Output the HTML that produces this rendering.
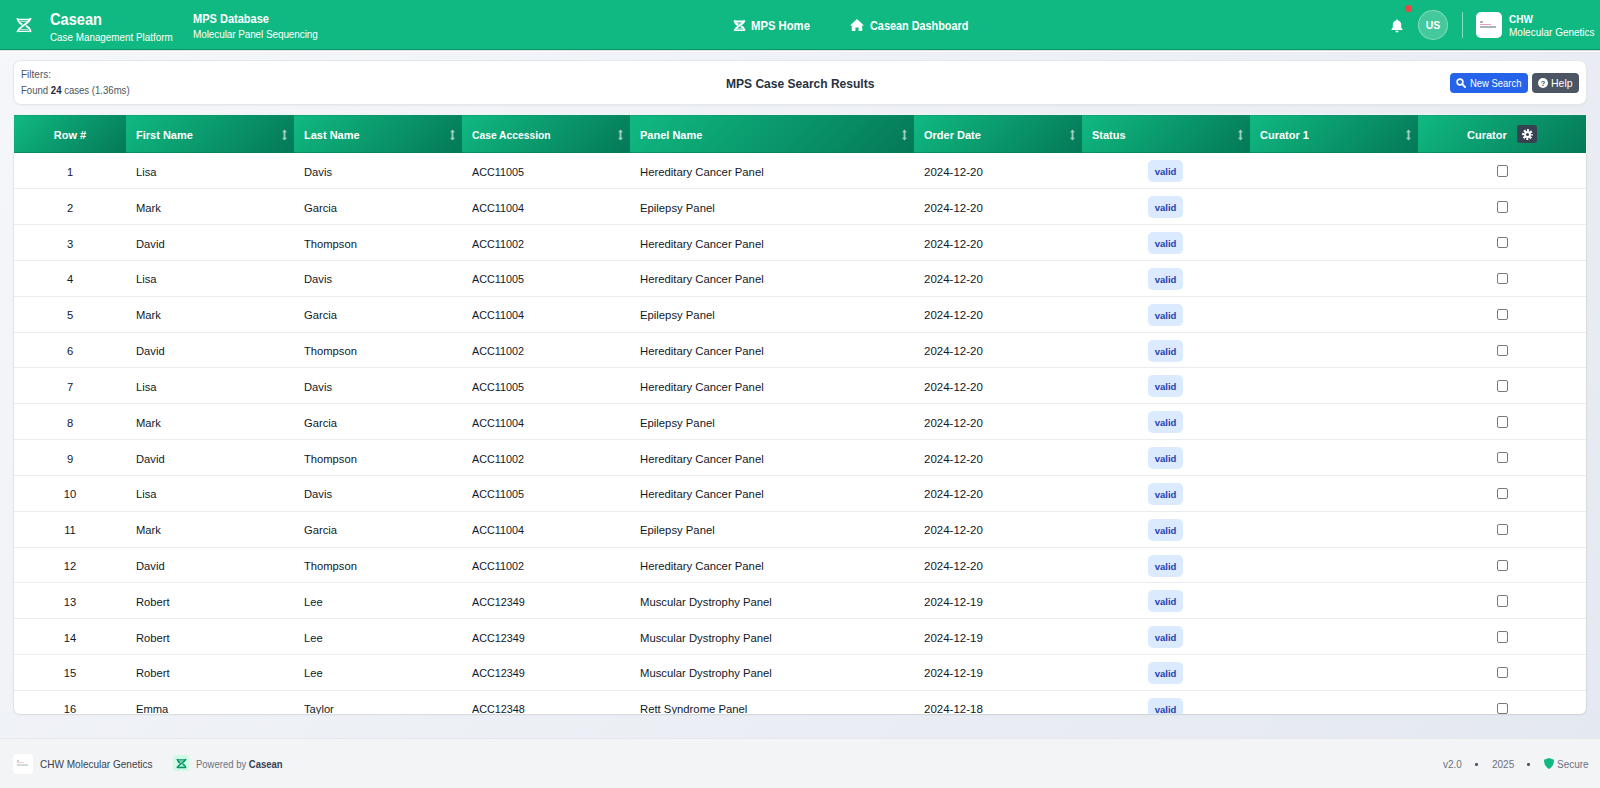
<!DOCTYPE html>
<html>
<head>
<meta charset="utf-8">
<style>
*{box-sizing:border-box;margin:0;padding:0}
html,body{width:1600px;height:788px;overflow:hidden}
body{font-family:"Liberation Sans",sans-serif;position:relative;background:linear-gradient(135deg,#f5f7fa 0%,#e4e8f0 100%);color:#1f2937}
.abs{position:absolute;white-space:nowrap}
#hdr{position:absolute;left:0;top:0;width:1600px;height:50px;background:#10b981;border-bottom:1px solid #059669;box-shadow:0 1px 2px rgba(0,0,0,.12)}
#hdrline{position:absolute;left:0;top:51px;width:1600px;height:1px;background:rgba(255,255,255,.9)}
.w{color:#fff}
svg{display:block}
#card{position:absolute;left:13px;top:60px;width:1574px;height:44.5px;background:#fff;border:1px solid #e5e7eb;border-radius:8px;box-shadow:0 1px 2px rgba(0,0,0,.04)}
.btn{position:absolute;top:73px;height:20px;border-radius:4px;color:#fff;font-size:11px}
#tblw{position:absolute;left:13px;top:114px;width:1574px;height:40px;background:#fff}
#tbl{position:absolute;left:14px;top:115px;width:1572px;height:599.3px;background:#fff;border-radius:0 0 6px 6px;overflow:hidden;box-shadow:0 0 0 1px rgba(0,0,0,.05),0 1px 3px rgba(0,0,0,.05)}
#thead{position:absolute;left:0;top:0;width:1572px;height:38.4px}
#rows{position:absolute;left:0;top:38.4px;width:1572px;display:flex;flex-direction:column}
.th{position:absolute;top:0;height:38.4px;box-shadow:inset 0 -1px 0 rgba(4,120,87,.55),inset 0 1px 0 rgba(5,150,105,.35);background:linear-gradient(135deg,#10b981 0%,#047857 100%);color:#fff;font-weight:700;font-size:11px}
.th span{position:absolute;top:14px}
.srt{position:absolute;top:14px;right:7px}
.row{position:relative;flex:0 0 35.83px;width:1572px;height:35.83px;border-bottom:1px solid #eaecef}
.c{position:absolute;top:12.5px;font-size:11.2px;color:#111827;white-space:nowrap}
.badge{position:absolute;top:7px;left:1134px;width:35px;height:22px;border-radius:5px;background:#dbeafe;color:#1e40af;font-size:9.5px;font-weight:700;text-align:center;line-height:24px}
.cb{position:absolute;top:12px;left:1482.5px;width:11.4px;height:11.4px;border:1px solid #7a7a7a;border-radius:2px;background:#fff}
#ftr{position:absolute;left:0;top:738px;width:1600px;height:50px;background:#f3f4f6;border-top:1px solid #e5e7eb}
</style>
</head>
<body>
<div id="hdr"></div>
<div id="hdrline"></div>

<!-- logo dna -->
<svg class="abs" style="left:14px;top:15px" width="20" height="20" viewBox="0 0 20 20">
 <g fill="none" stroke="#fff">
  <path d="M3.4 3.0 C3.8 6.2 5.8 8.3 8.3 9.5 M11.8 10.8 C14.2 11.9 16.2 14 16.6 17.2" stroke-width="1.9"/>
  <path d="M16.6 3.0 C15.8 8.6 4.2 11.4 3.4 17.2" stroke-width="1.9"/>
  <path d="M4.6 4.5 H15.4 M4.6 16.4 H15.4" stroke-width="1.4"/>
  <path d="M6.2 6.5 H13.8 M6.2 14.5 H13.8" stroke-width="1.0" stroke-opacity=".65"/>
 </g>
</svg>
<div class="abs w" style="left:50px;top:11px;font-size:16px;font-weight:700;transform:scaleX(.914);transform-origin:0 0">Casean</div>
<div class="abs w" style="left:50px;top:32px;font-size:10px;transform:scaleX(.985);transform-origin:0 0">Case Management Platform</div>
<div class="abs w" style="left:193px;top:12px;font-size:12px;font-weight:700;transform:scaleX(.919);transform-origin:0 0">MPS Database</div>
<div class="abs w" style="left:193px;top:29px;font-size:10px;letter-spacing:-0.1px">Molecular Panel Sequencing</div>

<!-- nav -->
<svg class="abs" style="left:732px;top:17.5px" width="15" height="15" viewBox="0 0 20 20">
 <g fill="none" stroke="#fff">
  <path d="M3.4 3.0 C3.8 6.2 5.8 8.3 8.3 9.5 M11.8 10.8 C14.2 11.9 16.2 14 16.6 17.2" stroke-width="2.7"/>
  <path d="M16.6 3.0 C15.8 8.6 4.2 11.4 3.4 17.2" stroke-width="2.7"/>
  <path d="M4.6 4.5 H15.4 M4.6 16.4 H15.4" stroke-width="2.1"/>
  <path d="M6.2 6.6 H13.8 M6.2 14.4 H13.8" stroke-width="1.4" stroke-opacity=".65"/>
 </g>
</svg>
<div class="abs w" style="left:751px;top:19px;font-size:12px;font-weight:700;transform:scaleX(.94);transform-origin:0 0">MPS Home</div>
<svg class="abs" style="left:850px;top:19px" width="14" height="12" viewBox="0 0 14 12">
 <path d="M7 0 L14 6.6 L12.2 6.6 L12.2 12 L8.6 12 L8.6 8.4 L5.4 8.4 L5.4 12 L1.8 12 L1.8 6.6 L0 6.6 Z" fill="#fff"/>
</svg>
<div class="abs w" style="left:870px;top:19px;font-size:12px;font-weight:700;transform:scaleX(.905);transform-origin:0 0">Casean Dashboard</div>

<!-- right header -->
<svg class="abs" style="left:1391px;top:19px" width="12" height="14" viewBox="0 0 12 14">
 <path d="M6 0.5 C6.6 0.5 7 0.9 7 1.5 C9 1.9 10.2 3.6 10.2 5.6 L10.2 8.5 L11.6 10.4 L11.6 11 L0.4 11 L0.4 10.4 L1.8 8.5 L1.8 5.6 C1.8 3.6 3 1.9 5 1.5 C5 0.9 5.4 0.5 6 0.5 Z M4.4 11.8 L7.6 11.8 C7.6 12.7 6.9 13.4 6 13.4 C5.1 13.4 4.4 12.7 4.4 11.8 Z" fill="#fff"/>
</svg>
<div class="abs" style="left:1405px;top:5px;width:7px;height:7px;border-radius:50%;background:#ef4444"></div>
<div class="abs" style="left:1418px;top:10px;width:30px;height:30px;border-radius:50%;background:rgba(255,255,255,.22);border:1px solid rgba(255,255,255,.35);color:#fff;font-size:10.5px;font-weight:700;text-align:center;line-height:28px">US</div>
<div class="abs" style="left:1462px;top:12px;width:1px;height:26px;background:rgba(255,255,255,.5)"></div>
<div class="abs" style="left:1476px;top:12px;width:26px;height:26px;border-radius:5px;background:#fff">
 <div class="abs" style="left:4.3px;top:9.3px;width:3px;height:1.4px;background:#6b7280;opacity:.55"></div>
 <div class="abs" style="left:4.3px;top:11.8px;width:10.5px;height:1px;background:#db2777;opacity:.45"></div>
 <div class="abs" style="left:4.3px;top:14px;width:15.7px;height:1.5px;background:#6b7280;opacity:.55"></div>
</div>
<div class="abs w" style="left:1509px;top:14px;font-size:10px;font-weight:700">CHW</div>
<div class="abs w" style="left:1509px;top:27px;font-size:10px">Molecular Genetics</div>

<!-- card -->
<div id="card"></div>
<div class="abs" style="left:21px;top:69px;font-size:10px;color:#4b5563">Filters:</div>
<div class="abs" style="left:21px;top:84.5px;font-size:10.2px;color:#4b5563;transform:scaleX(.94);transform-origin:0 0">Found <b style="color:#1f2937">24</b> cases (1.36ms)</div>
<div class="abs" style="left:726px;top:76px;font-size:13px;font-weight:700;color:#263141;transform:scaleX(.925);transform-origin:0 0">MPS Case Search Results</div>
<div class="btn" style="left:1450px;width:78px;background:#2563eb">
 <svg class="abs" style="left:6px;top:5px" width="10" height="10" viewBox="0 0 10 10"><circle cx="4" cy="4" r="2.9" fill="none" stroke="#fff" stroke-width="1.6"/><path d="M6.2 6.2 L9 9" stroke="#fff" stroke-width="1.8" stroke-linecap="round"/></svg>
 <span class="abs" style="left:20px;top:4px;font-size:10.5px;transform:scaleX(.9);transform-origin:0 0">New Search</span>
</div>
<div class="btn" style="left:1532px;width:47px;background:#4b5563">
 <svg class="abs" style="left:6px;top:5px" width="10" height="10" viewBox="0 0 10 10"><circle cx="5" cy="5" r="5" fill="#fff"/><text x="5" y="8" font-size="7.5" font-family="Liberation Sans" font-weight="700" text-anchor="middle" fill="#4b5563">?</text></svg>
 <span class="abs" style="left:19px;top:4px;font-size:10.5px">Help</span>
</div>

<!-- table -->
<div id="tblw"></div>
<div id="tbl">
<div id="thead">
 <div class="th" style="left:0;width:112px"><span style="left:0;width:112px;text-align:center">Row #</span></div>
 <div class="th" style="left:112px;width:168px"><span style="left:10px">First Name</span><svg class="srt" width="5" height="12" viewBox="0 0 5 12"><path d="M2.5 0.6 L5 3.3 H3.4 V8.7 H5 L2.5 11.4 L0 8.7 H1.6 V3.3 H0 Z" fill="#fff" fill-opacity=".62"/></svg></div>
 <div class="th" style="left:280px;width:168px"><span style="left:10px">Last Name</span><svg class="srt" width="5" height="12" viewBox="0 0 5 12"><path d="M2.5 0.6 L5 3.3 H3.4 V8.7 H5 L2.5 11.4 L0 8.7 H1.6 V3.3 H0 Z" fill="#fff" fill-opacity=".62"/></svg></div>
 <div class="th" style="left:448px;width:168px"><span style="left:10px;transform:scaleX(.936);transform-origin:0 0">Case Accession</span><svg class="srt" width="5" height="12" viewBox="0 0 5 12"><path d="M2.5 0.6 L5 3.3 H3.4 V8.7 H5 L2.5 11.4 L0 8.7 H1.6 V3.3 H0 Z" fill="#fff" fill-opacity=".62"/></svg></div>
 <div class="th" style="left:616px;width:284px"><span style="left:10px">Panel Name</span><svg class="srt" width="5" height="12" viewBox="0 0 5 12"><path d="M2.5 0.6 L5 3.3 H3.4 V8.7 H5 L2.5 11.4 L0 8.7 H1.6 V3.3 H0 Z" fill="#fff" fill-opacity=".62"/></svg></div>
 <div class="th" style="left:900px;width:168px"><span style="left:10px">Order Date</span><svg class="srt" width="5" height="12" viewBox="0 0 5 12"><path d="M2.5 0.6 L5 3.3 H3.4 V8.7 H5 L2.5 11.4 L0 8.7 H1.6 V3.3 H0 Z" fill="#fff" fill-opacity=".62"/></svg></div>
 <div class="th" style="left:1068px;width:168px"><span style="left:10px">Status</span><svg class="srt" width="5" height="12" viewBox="0 0 5 12"><path d="M2.5 0.6 L5 3.3 H3.4 V8.7 H5 L2.5 11.4 L0 8.7 H1.6 V3.3 H0 Z" fill="#fff" fill-opacity=".62"/></svg></div>
 <div class="th" style="left:1236px;width:168px"><span style="left:10px">Curator 1</span><svg class="srt" width="5" height="12" viewBox="0 0 5 12"><path d="M2.5 0.6 L5 3.3 H3.4 V8.7 H5 L2.5 11.4 L0 8.7 H1.6 V3.3 H0 Z" fill="#fff" fill-opacity=".62"/></svg></div>
 <div class="th" style="left:1404px;width:168px"><span style="left:49px;top:13.5px">Curator</span>
  <div class="abs" style="left:99px;top:10px;width:20px;height:18px;border-radius:3px;background:#374151">
   <svg class="abs" style="left:4.5px;top:3.5px" width="11" height="11" viewBox="0 0 11 11"><circle cx="5.5" cy="5.5" r="4.3" fill="none" stroke="#fff" stroke-width="2.2" stroke-dasharray="2 1.38" stroke-dashoffset="1"/><circle cx="5.5" cy="5.5" r="3.5" fill="#fff"/><circle cx="5.5" cy="5.5" r="1.5" fill="#374151"/></svg>
  </div>
 </div>
 </div>
 <div id="rows">
<div class="row"><div class="c" style="left:0;width:112px;text-align:center">1</div><div class="c" style="left:122px">Lisa</div><div class="c" style="left:290px">Davis</div><div class="c" style="left:458px;font-size:10.8px">ACC11005</div><div class="c" style="left:626px;font-size:11.3px">Hereditary Cancer Panel</div><div class="c" style="left:910px;font-size:11.5px">2024-12-20</div><div class="badge">valid</div><div class="cb"></div></div>
<div class="row"><div class="c" style="left:0;width:112px;text-align:center">2</div><div class="c" style="left:122px">Mark</div><div class="c" style="left:290px">Garcia</div><div class="c" style="left:458px;font-size:10.8px">ACC11004</div><div class="c" style="left:626px;font-size:11.3px">Epilepsy Panel</div><div class="c" style="left:910px;font-size:11.5px">2024-12-20</div><div class="badge">valid</div><div class="cb"></div></div>
<div class="row"><div class="c" style="left:0;width:112px;text-align:center">3</div><div class="c" style="left:122px">David</div><div class="c" style="left:290px">Thompson</div><div class="c" style="left:458px;font-size:10.8px">ACC11002</div><div class="c" style="left:626px;font-size:11.3px">Hereditary Cancer Panel</div><div class="c" style="left:910px;font-size:11.5px">2024-12-20</div><div class="badge">valid</div><div class="cb"></div></div>
<div class="row"><div class="c" style="left:0;width:112px;text-align:center">4</div><div class="c" style="left:122px">Lisa</div><div class="c" style="left:290px">Davis</div><div class="c" style="left:458px;font-size:10.8px">ACC11005</div><div class="c" style="left:626px;font-size:11.3px">Hereditary Cancer Panel</div><div class="c" style="left:910px;font-size:11.5px">2024-12-20</div><div class="badge">valid</div><div class="cb"></div></div>
<div class="row"><div class="c" style="left:0;width:112px;text-align:center">5</div><div class="c" style="left:122px">Mark</div><div class="c" style="left:290px">Garcia</div><div class="c" style="left:458px;font-size:10.8px">ACC11004</div><div class="c" style="left:626px;font-size:11.3px">Epilepsy Panel</div><div class="c" style="left:910px;font-size:11.5px">2024-12-20</div><div class="badge">valid</div><div class="cb"></div></div>
<div class="row"><div class="c" style="left:0;width:112px;text-align:center">6</div><div class="c" style="left:122px">David</div><div class="c" style="left:290px">Thompson</div><div class="c" style="left:458px;font-size:10.8px">ACC11002</div><div class="c" style="left:626px;font-size:11.3px">Hereditary Cancer Panel</div><div class="c" style="left:910px;font-size:11.5px">2024-12-20</div><div class="badge">valid</div><div class="cb"></div></div>
<div class="row"><div class="c" style="left:0;width:112px;text-align:center">7</div><div class="c" style="left:122px">Lisa</div><div class="c" style="left:290px">Davis</div><div class="c" style="left:458px;font-size:10.8px">ACC11005</div><div class="c" style="left:626px;font-size:11.3px">Hereditary Cancer Panel</div><div class="c" style="left:910px;font-size:11.5px">2024-12-20</div><div class="badge">valid</div><div class="cb"></div></div>
<div class="row"><div class="c" style="left:0;width:112px;text-align:center">8</div><div class="c" style="left:122px">Mark</div><div class="c" style="left:290px">Garcia</div><div class="c" style="left:458px;font-size:10.8px">ACC11004</div><div class="c" style="left:626px;font-size:11.3px">Epilepsy Panel</div><div class="c" style="left:910px;font-size:11.5px">2024-12-20</div><div class="badge">valid</div><div class="cb"></div></div>
<div class="row"><div class="c" style="left:0;width:112px;text-align:center">9</div><div class="c" style="left:122px">David</div><div class="c" style="left:290px">Thompson</div><div class="c" style="left:458px;font-size:10.8px">ACC11002</div><div class="c" style="left:626px;font-size:11.3px">Hereditary Cancer Panel</div><div class="c" style="left:910px;font-size:11.5px">2024-12-20</div><div class="badge">valid</div><div class="cb"></div></div>
<div class="row"><div class="c" style="left:0;width:112px;text-align:center">10</div><div class="c" style="left:122px">Lisa</div><div class="c" style="left:290px">Davis</div><div class="c" style="left:458px;font-size:10.8px">ACC11005</div><div class="c" style="left:626px;font-size:11.3px">Hereditary Cancer Panel</div><div class="c" style="left:910px;font-size:11.5px">2024-12-20</div><div class="badge">valid</div><div class="cb"></div></div>
<div class="row"><div class="c" style="left:0;width:112px;text-align:center">11</div><div class="c" style="left:122px">Mark</div><div class="c" style="left:290px">Garcia</div><div class="c" style="left:458px;font-size:10.8px">ACC11004</div><div class="c" style="left:626px;font-size:11.3px">Epilepsy Panel</div><div class="c" style="left:910px;font-size:11.5px">2024-12-20</div><div class="badge">valid</div><div class="cb"></div></div>
<div class="row"><div class="c" style="left:0;width:112px;text-align:center">12</div><div class="c" style="left:122px">David</div><div class="c" style="left:290px">Thompson</div><div class="c" style="left:458px;font-size:10.8px">ACC11002</div><div class="c" style="left:626px;font-size:11.3px">Hereditary Cancer Panel</div><div class="c" style="left:910px;font-size:11.5px">2024-12-20</div><div class="badge">valid</div><div class="cb"></div></div>
<div class="row"><div class="c" style="left:0;width:112px;text-align:center">13</div><div class="c" style="left:122px">Robert</div><div class="c" style="left:290px">Lee</div><div class="c" style="left:458px;font-size:10.8px">ACC12349</div><div class="c" style="left:626px;font-size:11.3px">Muscular Dystrophy Panel</div><div class="c" style="left:910px;font-size:11.5px">2024-12-19</div><div class="badge">valid</div><div class="cb"></div></div>
<div class="row"><div class="c" style="left:0;width:112px;text-align:center">14</div><div class="c" style="left:122px">Robert</div><div class="c" style="left:290px">Lee</div><div class="c" style="left:458px;font-size:10.8px">ACC12349</div><div class="c" style="left:626px;font-size:11.3px">Muscular Dystrophy Panel</div><div class="c" style="left:910px;font-size:11.5px">2024-12-19</div><div class="badge">valid</div><div class="cb"></div></div>
<div class="row"><div class="c" style="left:0;width:112px;text-align:center">15</div><div class="c" style="left:122px">Robert</div><div class="c" style="left:290px">Lee</div><div class="c" style="left:458px;font-size:10.8px">ACC12349</div><div class="c" style="left:626px;font-size:11.3px">Muscular Dystrophy Panel</div><div class="c" style="left:910px;font-size:11.5px">2024-12-19</div><div class="badge">valid</div><div class="cb"></div></div>
<div class="row"><div class="c" style="left:0;width:112px;text-align:center">16</div><div class="c" style="left:122px">Emma</div><div class="c" style="left:290px">Taylor</div><div class="c" style="left:458px;font-size:10.8px">ACC12348</div><div class="c" style="left:626px;font-size:11.3px">Rett Syndrome Panel</div><div class="c" style="left:910px;font-size:11.5px">2024-12-18</div><div class="badge">valid</div><div class="cb"></div></div>
</div>
</div>

<!-- footer -->
<div id="ftr"></div>
<div class="abs" style="left:13px;top:753.5px;width:20px;height:20px;border-radius:4px;background:#fff;box-shadow:0 0 1px rgba(0,0,0,.06)">
 <div class="abs" style="left:4.2px;top:6.6px;width:2px;height:1.5px;background:#6b7280;opacity:.35"></div>
 <div class="abs" style="left:4px;top:8.8px;width:7px;height:1.2px;background:#db2777;opacity:.25"></div>
 <div class="abs" style="left:4px;top:10.6px;width:11px;height:1.6px;background:#6b7280;opacity:.28"></div>
</div>
<div class="abs" style="left:40px;top:759px;font-size:10.4px;color:#374151;transform:scaleX(.965);transform-origin:0 0">CHW Molecular Genetics</div>
<div class="abs" style="left:173px;top:755px;width:16px;height:16px;border-radius:3px;background:#d1fae5">
 <svg class="abs" style="left:1.5px;top:1.5px" width="13" height="13" viewBox="0 0 20 20">
  <g fill="none" stroke="#059669">
   <path d="M3.4 3.0 C3.8 6.2 5.8 8.3 8.3 9.5 M11.8 10.8 C14.2 11.9 16.2 14 16.6 17.2" stroke-width="2.4"/>
   <path d="M16.6 3.0 C15.8 8.6 4.2 11.4 3.4 17.2" stroke-width="2.4"/>
   <path d="M4.6 4.5 H15.4 M4.6 16.4 H15.4" stroke-width="1.8"/>
   <path d="M6.2 6.6 H13.8 M6.2 14.4 H13.8" stroke-width="1.2" stroke-opacity=".6"/>
  </g>
 </svg>
</div>
<div class="abs" style="left:196px;top:759px;font-size:10px;color:#6b7280;transform:scaleX(.95);transform-origin:0 0">Powered by <b style="color:#374151">Casean</b></div>
<div class="abs" style="left:1443px;top:759px;font-size:10px;color:#6b7280">v2.0</div>
<div class="abs" style="left:1475px;top:763px;width:2.5px;height:2.5px;border-radius:50%;background:#4b5563"></div>
<div class="abs" style="left:1492px;top:759px;font-size:10px;color:#6b7280">2025</div>
<div class="abs" style="left:1527px;top:763px;width:2.5px;height:2.5px;border-radius:50%;background:#4b5563"></div>
<svg class="abs" style="left:1544px;top:758px" width="10" height="11" viewBox="0 0 10 11"><path d="M5 0 L10 1.8 C10 6 8.5 9 5 11 C1.5 9 0 6 0 1.8 Z" fill="#10b981"/></svg>
<div class="abs" style="left:1557px;top:759px;font-size:10px;color:#6b7280">Secure</div>


</body>
</html>
